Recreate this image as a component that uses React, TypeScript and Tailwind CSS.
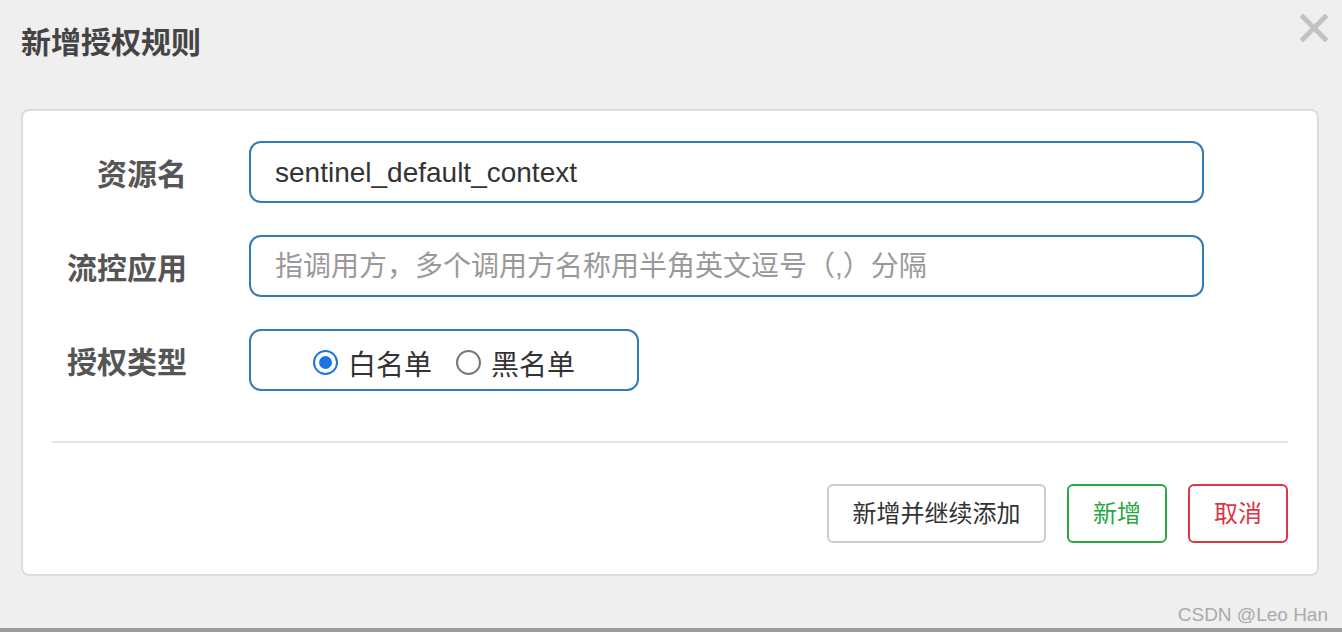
import React from "react";

const cjk = "font-['Helvetica_Neue','Liberation_Sans','Noto_Sans_CJK_SC',sans-serif]";

function Radio({ checked, label }: { checked: boolean; label: string }) {
  return (
    <label className="flex items-center">
      {checked ? (
        <span className="flex h-[25px] w-[25px] items-center justify-center rounded-full border-[2.5px] border-[#1a73e8] bg-white">
          <span className="h-[13px] w-[13px] rounded-full bg-[#1a73e8]" />
        </span>
      ) : (
        <span className="h-[25px] w-[25px] rounded-full border-2 border-[#767676] bg-white" />
      )}
      <span className="ml-[10px] mt-[8px] text-[28px] leading-none text-[#333]">{label}</span>
    </label>
  );
}

function Row({ label, children }: { label: string; children: React.ReactNode }) {
  return (
    <div className="flex items-center">
      <div className="w-[135px] pt-[5px] text-right text-[30px] font-bold leading-none text-[#555]">{label}</div>
      <div className="ml-[62px]">{children}</div>
    </div>
  );
}

export default function App() {
  return (
    <div className={`relative flex h-[632px] w-[1342px] flex-col overflow-hidden bg-[#efefef] ${cjk}`}>
      {/* header */}
      <div className="flex h-[109px] items-start justify-between">
        <h4 className="pl-[21px] pt-[27px] text-[30px] font-bold leading-[32px] text-[#444]">新增授权规则</h4>
        <button className="mr-[14px] mt-[14px] h-[28px] w-[28px]">
          <svg viewBox="0 0 28 28" className="h-[28px] w-[28px]">
            <path d="M3 3 L25 25 M25 3 L3 25" stroke="#c2c2c2" strokeWidth="5" strokeLinecap="square" />
          </svg>
        </button>
      </div>

      {/* card */}
      <div className="ml-[21px] flex h-[467px] w-[1298px] flex-col rounded-[8px] border-2 border-[#dcdcdc] bg-white px-[29px] pt-[30px]">
        <div className="flex flex-col gap-[32px]">
          <Row label="资源名">
            <input
              readOnly
              value="sentinel_default_context"
              className="h-[62px] w-[955px] rounded-[12px] border-2 border-[#337ab7] bg-white px-[24px] pt-[2px] text-[28px] text-[#333] outline-none"
            />
          </Row>
          <Row label="流控应用">
            <input
              readOnly
              placeholder="指调用方，多个调用方名称用半角英文逗号（,）分隔"
              className="h-[62px] w-[955px] rounded-[12px] border-2 border-[#337ab7] bg-white px-[24px] pt-[2px] text-[28px] text-[#333] outline-none placeholder:text-[#999]"
            />
          </Row>
          <Row label="授权类型">
            <div className="flex h-[62px] w-[390px] items-center justify-center gap-[24px] rounded-[12px] border-2 border-[#337ab7] bg-white pt-[4px]">
              <Radio checked label="白名单" />
              <Radio checked={false} label="黑名单" />
            </div>
          </Row>
        </div>

        <div className="mt-[50px] h-[2px] bg-[#e5e5e5]" />

        <div className="mt-[41px] flex justify-end gap-[21px]">
          <button className="h-[59px] w-[219px] rounded-[6px] border-2 border-[#cccccc] bg-white text-[24px] text-[#333]">新增并继续添加</button>
          <button className="h-[59px] w-[100px] rounded-[6px] border-2 border-[#28a745] bg-white text-[24px] text-[#28a745]">新增</button>
          <button className="h-[59px] w-[100px] rounded-[6px] border-2 border-[#dc3545] bg-white text-[24px] text-[#dc3545]">取消</button>
        </div>
      </div>

      <div className="flex-1" />
      <div className="h-[4px] bg-[#9a9a9a]" />

      <span className="absolute bottom-[8px] right-[14px] font-['Liberation_Sans',sans-serif] text-[19px] leading-none text-[#aaaaaa]">
        CSDN @Leo Han
      </span>
    </div>
  );
}
